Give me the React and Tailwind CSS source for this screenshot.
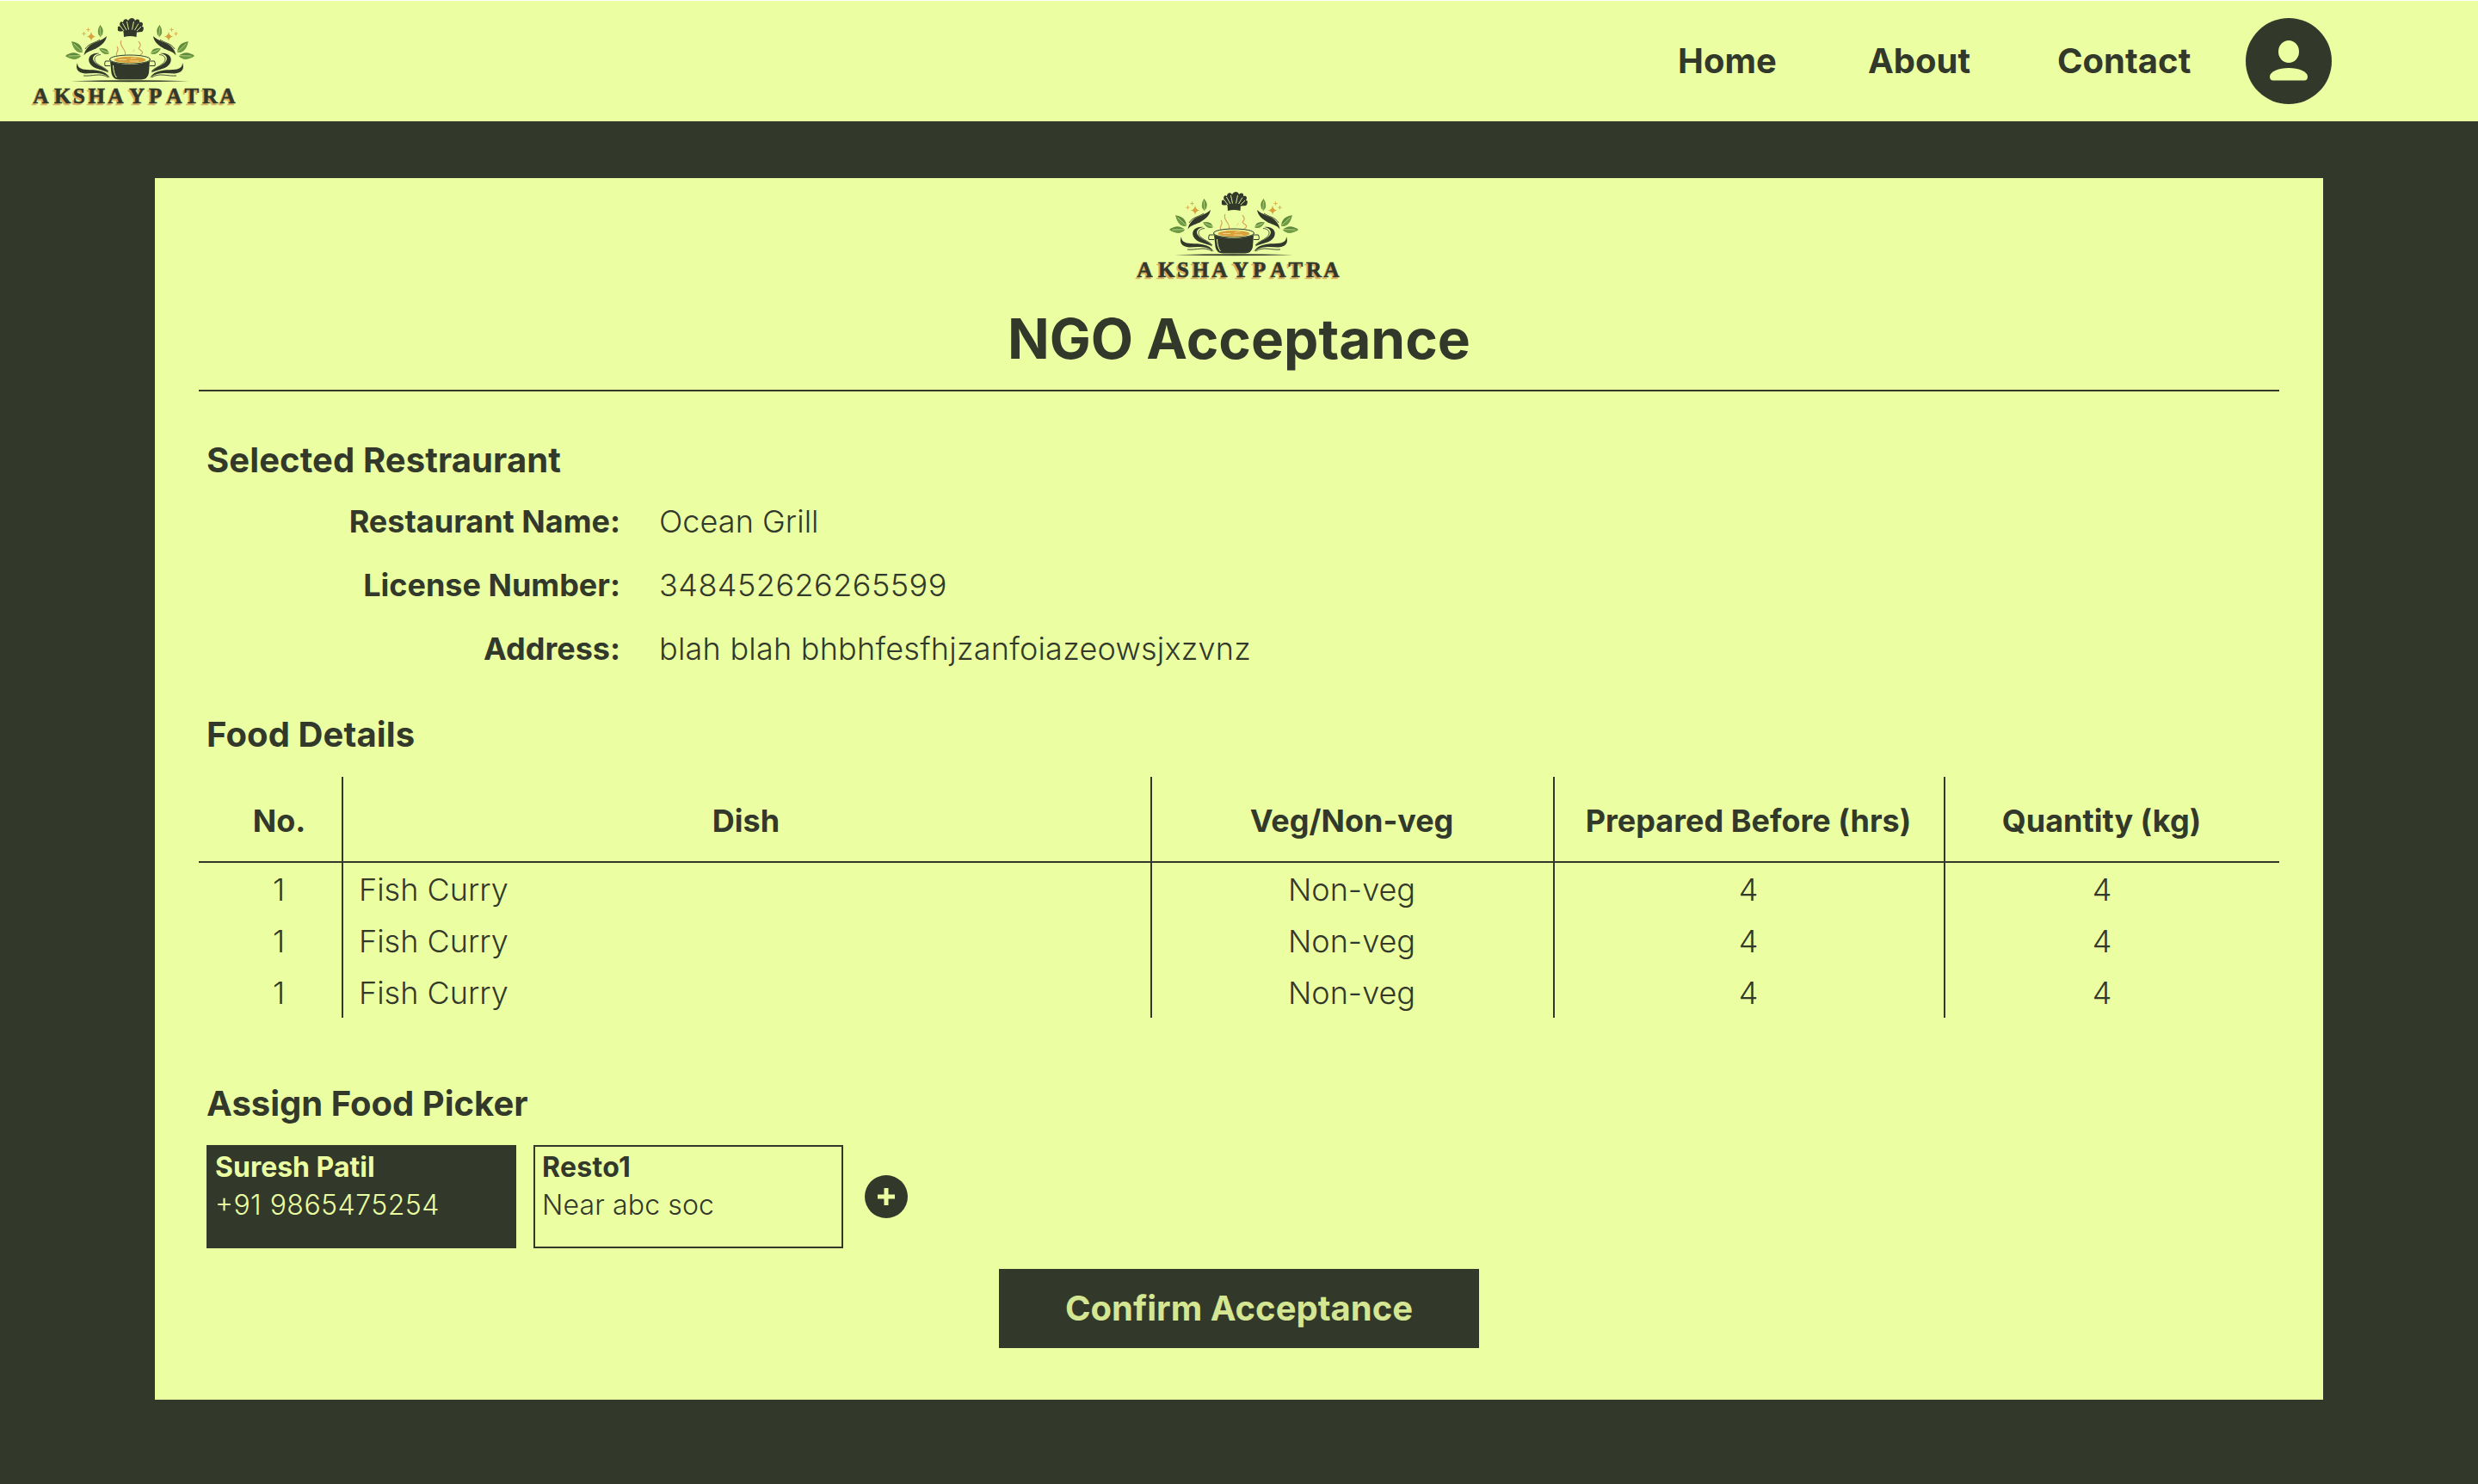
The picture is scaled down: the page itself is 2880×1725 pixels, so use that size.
import React from "react";

const DISHES = [1, 2, 3];

function Leaf({ x, y, r, l = 14, w = 4.5 }) {
  return (
    <g transform={`translate(${x} ${y}) rotate(${r})`}>
      <path d={`M0 0Q${l * 0.35} ${-w * 1.5} ${l} 0Q${l * 0.45} ${w * 1.5} 0 0Z`} fill="#5f8a3c" />
      <path d={`M0 0Q${l * 0.35} ${-w * 1.5} ${l} 0Q${l * 0.45} ${w * 0.2} 0 0Z`} fill="#6f9c45" />
      <path d={`M-2 0.5L${l * 0.8} 0`} stroke="#e2f59a" strokeWidth="0.6" />
    </g>
  );
}

function Side() {
  return (
    <g transform="translate(20 0)">
      <Leaf x={97} y={42} r={-92} l={14} w={4} />
      <Leaf x={76} y={60} r={-135} l={18} w={5} />
      <Leaf x={74} y={64} r={-180} l={18} w={5} />
      <Leaf x={107} y={61} r={-155} l={13} w={4} />
      <path d="M86 35.500Q86.500 41 91.500 41.500Q86.500 42 86 47Q85.500 42 80.500 41.500Q85.500 41 86 35.500Z" fill="#d6a23e" />
      <path d="M77.500 36v4.400M75.300 38.200h4.400M82.500 31.300v4.400M80.300 33.500h4.400" stroke="#d9ad4a" strokeWidth="0.9" />
      <path d="M104 41C98 47 88 48 83 53C79.500 56.500 78 60 77.500 63.500C81 58 88 58 93 54.500C99 51 103 47 104 41Z" fill="#32392b" />
      <path d="M79 56C83 49 91 49 96 45" fill="none" stroke="#32392b" strokeWidth="0.9" />
      <path d="M96 61C87 59.500 81 65 84 72C88 80 98 79 106 83.500C103 77 93 76 89 70C86.500 66 89 62 96 61Z" fill="#32392b" />
      <path d="M97 62.500C89 63 88 69 93 73C98 77 103 78 106 82" fill="none" stroke="#32392b" strokeWidth="0.8" />
      <path d="M70 72C67 79 71 84 79 84.500C88 84.500 98 82 108 89.500C102 80 91 80.500 81 80C74 79.500 70 78 70 72Z" fill="#32392b" />
      <path d="M77 87C88 88 96 83 106 89" fill="none" stroke="#32392b" strokeWidth="0.9" />
    </g>
  );
}

const LETTER_X = "38.500 63 85 102.500 125.500 150 173 193.500 214.500 235 255.500";
const SHADOW_X = "36.700 61.200 83.200 100.700 123.700 148.200 171.200 191.700 212.700 233.200 253.700";

function Logo({ className }) {
  return (
    <svg viewBox="20 0 270 141" className={className} fill="none">
      <Side />
      <g transform="translate(302 0) scale(-1 1)"><Side /></g>
      <path d="M143 35C139 36 136 36 137 32C136 29 139 29 140 30C138 26 140 23 143 25C143 21 147 20 149 23C151 19 156 19 157 23C160 20 163 22 162 25C166 24 167 27 165 30C168 29 167 35 165 36L159 36.500H144Z" fill="#32392b" />
      <path d="M144 35L139.500 29M147 34L142.500 26M149.500 33.500L147.500 24M153.500 33.500L155.500 24M156.500 34L161 26.500M159 35L164 30" stroke="#ebffa2" strokeWidth="0.9" />
      <path d="M143.500 35.500Q151 33.500 159 35.500L158.500 42Q151 40 144 42Z" fill="#32392b" />
      <path d="M136 64c-3-5 4-5 0-11M145 64c4-7-8-11-4-18M163 63c8-5-5-6-1-9c3-3 0-5-1-7" stroke="#d3a458" strokeWidth="1.2" />
      <path d="M156 56q1 2-2 3" stroke="#d3a458" strokeWidth="0.5" />
      <ellipse cx="151" cy="68" rx="23.5" ry="5" fill="#ebffa2" stroke="#32392b" strokeWidth="1" />
      <ellipse cx="151" cy="68.5" rx="18.5" ry="3.7" fill="#d9a13c" />
      <path d="M138 68.500h9M152 67l7-1M151 70h10" stroke="#f3dc8c" strokeWidth="0.9" />
      <path d="M128 70Q151 78 174 70L173 84Q171.500 91.500 164 91.500H138.500Q131 91.500 129.500 84Z" fill="#32392b" />
      <path d="M131.500 75q0.500 10 4 14" stroke="#ebffa2" strokeWidth="1" />
      <path d="M128 70h-5.500q-1.500 3-.5 5.500h6M174 70h5.500q1.500 3 .5 5.500h-6" stroke="#32392b" strokeWidth="1" />
      <path d="M82 93.300Q151 91.300 220 93.300Q151 95 82 93.300Z" fill="#32392b" />
      <g fontFamily="'Liberation Serif', serif" fontWeight="700" fontSize="25" strokeWidth="0.6">
        <text x={SHADOW_X} y="120.5" fill="#dcae62" stroke="#dcae62">AKSHAYPATRA</text>
        <text x={LETTER_X} y="119.2" fill="#32392b" stroke="#32392b">AKSHAYPATRA</text>
      </g>
    </svg>
  );
}

function Heading({ children, className }) {
  return <h2 className={`pl-[9px] text-[40px] leading-12 font-bold ${className}`}>{children}</h2>;
}

function Detail({ label, value, className }) {
  return (
    <div className="flex h-[74px] items-center text-[36px] leading-11">
      <dt className="w-[490px] text-right font-bold">{label}</dt>
      <dd className={`ml-[45px] font-light ${className}`}>{value}</dd>
    </div>
  );
}

export default function App() {
  return (
    <div className="flex h-[1725px] w-[2880px] flex-col bg-[#32392b] font-['Inter',sans-serif] text-[#32392b]">
      <header className="flex h-[141px] shrink-0 items-center border-t border-white bg-[#ebffa2]">
        <div className="w-[1950px] pl-5">
          <Logo className="h-[141px] w-[270px]" />
        </div>
        <nav className="flex text-[40px] leading-12 font-bold">
          <a className="w-[221px]">Home</a>
          <a className="w-[219px]">About</a>
          <a className="w-[220px] pl-px">Contact</a>
        </nav>
        <button className="flex size-[100px] items-center justify-center rounded-full bg-[#32392b]">
          <svg viewBox="0 0 44 48" className="h-12 w-11" fill="#ebffa2">
            <ellipse cx="22" cy="13" rx="12" ry="13" />
            <path d="M0 42C0 36 11 32 22 32S44 36 44 42Q44 46.500 40 46.500H4Q0 46.500 0 42Z" />
          </svg>
        </button>
      </header>

      <main className="mx-auto mt-[66px] flex h-[1420px] w-[2520px] flex-col bg-[#ebffa2] px-[51px]">
        <Logo className="mt-[-4px] mr-1 h-[141px] w-[270px] self-center" />
        <h1 className="mt-[11px] text-center text-[64px] leading-[78px] font-bold">NGO Acceptance</h1>
        <hr className="mt-5 border-t-2 border-[#32392b]" />

        <Heading className="mt-[56px] tracking-[0.1px]">Selected Restraurant</Heading>
        <dl className="mt-[10px]">
          <Detail label="Restaurant Name:" value="Ocean Grill" className="tracking-[0.05px]" />
          <Detail label="License Number:" value="348452626265599" className="tracking-[0.47px]" />
          <Detail label="Address:" value="blah blah bhbhfesfhjzanfoiazeowsjxzvnz" className="tracking-[0.24px]" />
        </dl>

        <Heading className="mt-[39px] tracking-[0.1px]">Food Details</Heading>
        <table className="mt-[25px] w-full table-fixed border-separate border-spacing-0 text-[36px] leading-11">
          <colgroup>
            <col className="w-[168px]" />
            <col className="w-[940px]" />
            <col className="w-[468px]" />
            <col className="w-[454px]" />
            <col />
          </colgroup>
          <thead>
            <tr className="h-[100px] divide-x-2 divide-[#32392b] *:border-b-2 *:border-[#32392b] *:pt-[3px]">
              <th className="pl-[21px]">No.</th>
              <th className="pr-[2px]">Dish</th>
              <th className="pr-[2px]">Veg/Non-veg</th>
              <th className="pr-[2px]">Prepared Before (hrs)</th>
              <th className="pr-[25px]">Quantity (kg)</th>
            </tr>
          </thead>
          <tbody className="text-center font-light">
            {DISHES.map((id) => (
              <tr key={id} className="h-[60px] divide-x-2 divide-[#32392b] *:pt-[2px]">
                <td className="pl-5">1</td>
                <td className="pl-[18px] text-left">Fish Curry</td>
                <td className="pr-[2px]">Non-veg</td>
                <td className="pr-[2px]">4</td>
                <td className="pr-6">4</td>
              </tr>
            ))}
          </tbody>
        </table>

        <Heading className="mt-[76px]">Assign Food Picker</Heading>
        <div className="mt-[24px] ml-[9px] flex items-center">
          <div className="h-[120px] w-[360px] border-2 border-[#32392b] bg-[#32392b] px-2 pt-[2px] text-[32px] leading-11 text-[#ebffa2]">
            <p className="font-bold">Suresh Patil</p>
            <p className="font-light tracking-[0.47px] [font-feature-settings:'calt']">+91 9865475254</p>
          </div>
          <div className="ml-5 h-[120px] w-[360px] border-2 border-[#32392b] px-2 pt-[2px] text-[32px] leading-11">
            <p className="font-bold tracking-[0.3px]">Resto1</p>
            <p className="font-light tracking-[0.15px]">Near abc soc</p>
          </div>
          <button className="ml-[25px] flex size-[50px] items-center justify-center rounded-full bg-[#32392b]">
            <svg viewBox="0 0 20 20" className="size-5" stroke="#ebffa2" strokeWidth="5">
              <path d="M10 0v20M0 10h20" />
            </svg>
          </button>
        </div>
        <button className="mt-[24px] h-[92px] w-[558px] self-center bg-[#32392b] text-[40px] font-bold text-[#d5e692]">Confirm Acceptance</button>
      </main>
    </div>
  );
}
